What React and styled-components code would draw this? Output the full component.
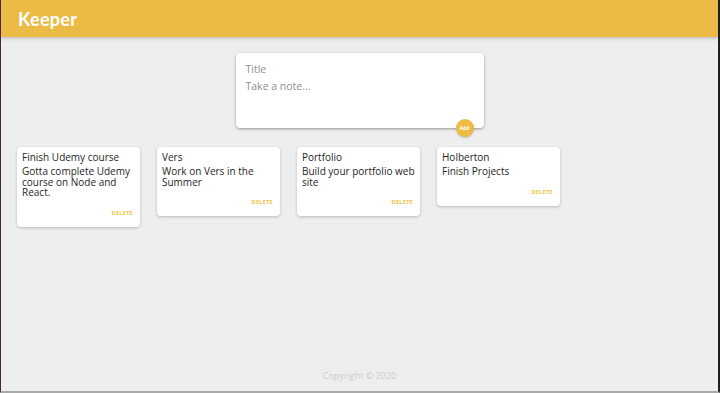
import React from "react";
import styled, { createGlobalStyle } from "styled-components";

const Global = createGlobalStyle`
  html, body { margin: 0; padding: 0; }
  body { background: #eeeeee; font-family: "Open Sans", "Liberation Sans", sans-serif; }
  * { box-sizing: border-box; }
`;

const Frame = styled.div`
  width: 720px;
  height: 393px;
  display: flex;
  flex-direction: column;
  background: #eeeeee;
  border-left: 1px solid #4a2a2a;
  border-right: 2px solid #1f1f1f;
  border-bottom: 2px solid #a9a9a9;
  overflow: hidden;
`;

const Header = styled.header`
  height: 37px;
  flex: none;
  background: #ebbb45;
  box-shadow: 0 1px 4px rgba(0, 0, 0, 0.25);
  display: flex;
  align-items: center;
  padding-left: 17px;
  position: relative;
  z-index: 1;
`;

const Logo = styled.h1`
  margin: 0;
  color: #fff;
  font-family: "Lato", "Open Sans", sans-serif;
  font-weight: 700;
  font-size: 18px;
  letter-spacing: 0.3px;
`;

const CreateForm = styled.form`
  position: relative;
  width: 248px;
  height: 75px;
  margin: 16px auto 19px;
  background: #fff;
  border-radius: 4px;
  box-shadow: 0 1px 3px rgba(138, 137, 137, 0.9);
  padding: 10px 10px;
  display: flex;
  flex-direction: column;
  gap: 4px;
`;

const Field = styled.div`
  font-size: 10.5px;
  color: #8f8f8f;
  line-height: 13px;
`;

const AddButton = styled.button`
  position: absolute;
  right: 10px;
  bottom: -9px;
  width: 18px;
  height: 18px;
  border-radius: 50%;
  border: none;
  background: #ecbc42;
  color: #fff;
  font-family: "Open Sans", sans-serif;
  font-size: 5px;
  font-weight: 700;
  padding: 0;
  box-shadow: 0 1px 2px rgba(0, 0, 0, 0.2);
`;

const Notes = styled.div`
  display: flex;
  align-items: flex-start;
  gap: 17px;
  padding-left: 16px;
`;

const Note = styled.div`
  width: 123px;
  background: #fff;
  border-radius: 4px;
  box-shadow: 0 1px 3px rgba(180, 180, 180, 0.9);
  padding: 4px 5px 5px;
  display: flex;
  flex-direction: column;
`;

const NoteTitle = styled.h2`
  margin: 0 0 2px;
  font-size: 10px;
  font-weight: 400;
  line-height: 13px;
  color: #1e1e1e;
`;

const NoteBody = styled.p`
  margin: 0;
  font-size: 10px;
  line-height: 10.7px;
  color: #1e1e1e;
  white-space: pre-wrap;
`;

const DeleteButton = styled.button`
  align-self: flex-end;
  margin: 6px 2px 0 0;
  height: 18px;
  border: none;
  background: none;
  padding: 0;
  color: #f3c13e;
  font-family: "Open Sans", sans-serif;
  font-size: 5.5px;
  font-weight: 700;
  letter-spacing: 0.3px;
`;

const Footer = styled.footer`
  margin-top: auto;
  height: 22px;
  text-align: center;
  color: #cccccc;
  font-size: 9px;
`;

const notes = [
  { title: "Finish Udemy course", content: "Gotta complete Udemy\ncourse on Node and\nReact." },
  { title: "Vers", content: "Work on Vers in the\nSummer" },
  { title: "Portfolio", content: "Build your portfolio web\nsite" },
  { title: "Holberton", content: "Finish Projects" },
];

export default function App() {
  return (
    <Frame>
      <Global />
      <Header>
        <Logo>Keeper</Logo>
      </Header>
      <CreateForm>
        <Field>Title</Field>
        <Field>Take a note...</Field>
        <AddButton type="button">Add</AddButton>
      </CreateForm>
      <Notes>
        {notes.map((n) => (
          <Note key={n.title}>
            <NoteTitle>{n.title}</NoteTitle>
            <NoteBody>{n.content}</NoteBody>
            <DeleteButton type="button">DELETE</DeleteButton>
          </Note>
        ))}
      </Notes>
      <Footer>Copyright © 2020</Footer>
    </Frame>
  );
}
